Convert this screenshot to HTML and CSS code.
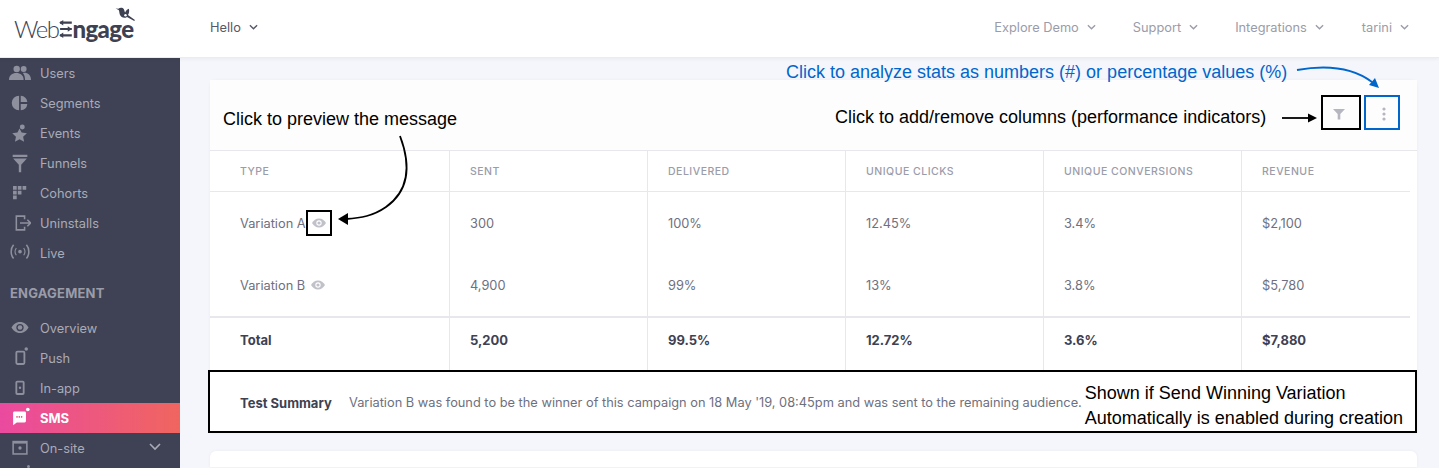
FILE: index.html
```html
<!DOCTYPE html>
<html lang="en">
<head>
<meta charset="utf-8">
<title>WebEngage SMS campaign</title>
<link rel="stylesheet" href="styles.css">
</head>
<body>
<header class="topbar">
  <div class="logo">
    <span class="logo-web">Web</span><svg class="logo-e" viewBox="0 0 14 20"><path d="M1 3h13M1 10h13M1 17h13" stroke="#3e4152" stroke-width="2.4" fill="none"/><path d="M4.500 0 0 3l4.500 3zM9.500 7l4.500 3-4.500 3zM4.500 14 0 17l4.500 3z" fill="#3e4152"/></svg><span class="logo-ngage">ngage</span>
    <svg class="logo-bird" viewBox="0 0 22 18"><path d="M.5 1.500 3.500 1.800C5 .3 8 .2 9.300 2.300c.8 1.400.5 2.600 1.300 3.500.8-2 2.400-3.800 4-4 .6 2.500.2 5-1 6.800l7.400 5.200-.7 1-7.700-4.300c-2.700 2-6.300.6-7.500-2.300-.7-1.700-.5-3.800-1.300-5z" fill="#3e4152"/><circle cx="11" cy="8.800" r="1.300" fill="#fff"/></svg>
  </div>
  <div class="nav-item nav-dark">Hello <svg class="chev" viewBox="0 0 10 6"><path d="M1 1l4 4 4-4"/></svg></div>
  <nav class="nav-right">
    <div class="nav-item">Explore Demo <svg class="chev" viewBox="0 0 10 6"><path d="M1 1l4 4 4-4"/></svg></div>
    <div class="nav-item">Support <svg class="chev" viewBox="0 0 10 6"><path d="M1 1l4 4 4-4"/></svg></div>
    <div class="nav-item">Integrations <svg class="chev" viewBox="0 0 10 6"><path d="M1 1l4 4 4-4"/></svg></div>
    <div class="nav-item nav-user">tarini <svg class="chev" viewBox="0 0 10 6"><path d="M1 1l4 4 4-4"/></svg></div>
  </nav>
</header>

<div class="shell">
  <aside class="sidebar">
    <a class="side-item"><svg class="side-icon" viewBox="0 0 24 24"><circle cx="8.400" cy="7.600" r="3.500"/><circle cx="16" cy="7.600" r="3.200"/><path d="M0 19.500c0-5 3.500-7.500 8-7.500s8 2.500 8 7.500zM17.500 19.500c0-3-.7-5.500-2.300-7.500 4.500-.8 8.800 1.800 8.800 7.500z"/></svg>Users</a>
    <a class="side-item"><svg class="side-icon" viewBox="0 0 24 24"><path d="M11 4v16a8 8 0 0 1 0-16zM12.800 4a8 8 0 0 1 7.200 7h-7.200zM12.800 13h7.200a8 8 0 0 1-7.200 7z"/></svg>Segments</a>
    <a class="side-item"><svg class="side-icon" viewBox="0 0 24 24"><path d="M11.500 7l2.300 4.500 5.700.7-4.100 3.900 1.100 5.400-5-2.700-5 2.700 1.100-5.400-4.100-3.900 5.700-.7z"/><circle cx="14.500" cy="5.500" r="2.700"/></svg>Events</a>
    <a class="side-item"><svg class="side-icon" viewBox="0 0 24 24"><path d="M4 3h16v2.500H4zM4.500 7h15L13.300 14v8h-2.600v-8z"/></svg>Funnels</a>
    <a class="side-item"><svg class="side-icon" viewBox="0 0 24 24"><path d="M4.400 4.400h4v4h-4zM9.600 4.400h4v4h-4zM14.800 4.400h4v4h-4zM4.400 9.600h4v4h-4zM9.600 9.600h4v4h-4zM4.400 14.800h4v4h-4z"/></svg>Cohorts</a>
    <a class="side-item"><svg class="side-icon line" viewBox="0 0 24 24"><path d="M17 8V4.500H8v15h9V16M12 12h11M20 8.500l3.500 3.500-3.500 3.500"/></svg>Uninstalls</a>
    <a class="side-item"><svg class="side-icon line" viewBox="0 0 24 24"><circle class="fill" cx="12" cy="10.500" r="2"/><path d="M5 3C1.500 7 1.500 14 5 18M19 3c3.500 4 3.500 11 0 15"/><path d="M8 6.500c-1.800 2.500-1.800 5.500 0 8M16 6.500c1.800 2.500 1.800 5.500 0 8" stroke-width="1.200"/></svg>Live</a>
    <div class="side-label">ENGAGEMENT</div>
    <a class="side-item"><svg class="side-icon" viewBox="0 0 24 24"><path d="M12 5.500c4.500 0 7.600 3 9.300 6-1.700 3-4.800 6-9.300 6s-7.600-3-9.300-6c1.700-3 4.800-6 9.300-6z"/><circle cx="12" cy="11.500" r="4" fill="#3f4254"/><circle cx="12" cy="11.500" r="2.500"/></svg>Overview</a>
    <a class="side-item"><svg class="side-icon line" viewBox="0 0 24 24"><rect x="8" y="5" width="8.800" height="13.500" rx="1.200" stroke-width="2"/><circle class="fill" cx="18.800" cy="2.200" r="1.900"/></svg>Push</a>
    <a class="side-item"><svg class="side-icon line" viewBox="0 0 24 24"><rect x="8" y="5" width="8" height="13.500" rx="1" stroke-width="2"/><circle class="fill" cx="12" cy="11.700" r="1.300"/></svg>In-app</a>
    <a class="side-item active"><svg class="side-icon" viewBox="0 0 24 24"><path d="M5.500 4.800h11.500a1.500 1.500 0 0 1 1.500 1.500v9a1.500 1.500 0 0 1-1.500 1.500H8.500l-4 3V6.300a1.500 1.500 0 0 1 1-1.500z"/><path d="M8 10.800h6.500" stroke="#ee5a85" stroke-width="1.800" stroke-dasharray="1.500 1"/><circle cx="20.500" cy="2.700" r="2"/></svg>SMS</a>
    <a class="side-item"><svg class="side-icon line" viewBox="0 0 24 24"><rect x="4.500" y="5" width="15" height="13.500" stroke-width="1.700"/><path d="M4.500 6h15" stroke-width="2.400"/><circle class="fill" cx="12" cy="12" r="1.800"/></svg>On-site<svg class="side-chev" viewBox="0 0 12 8"><path d="M1 1l5 5 5-5"/></svg></a>
    <div class="side-peek"><span class="side-peek-dot"></span></div>
  </aside>

  <main class="main">
    <section class="card">
      <div class="toolbar">
        <button class="tool tool-filter" aria-label="Filter columns"><svg viewBox="0 0 12 12"><path d="M0 1h12L7.300 6v5.500H4.700V6z"/></svg></button>
        <button class="tool tool-more" aria-label="More"><svg viewBox="0 0 4 14"><circle cx="2" cy="2" r="1.600"/><circle cx="2" cy="7" r="1.600"/><circle cx="2" cy="12" r="1.600"/></svg></button>
      </div>
      <div class="table">
        <div class="row row-head">
          <div class="cell">TYPE</div><div class="cell">SENT</div><div class="cell">DELIVERED</div><div class="cell">UNIQUE CLICKS</div><div class="cell">UNIQUE CONVERSIONS</div><div class="cell">REVENUE</div>
        </div>
        <div class="row row-body">
          <div class="cell"><span>Variation A</span><span class="eye eye-marked"><svg viewBox="0 0 14 10"><path d="M7 .5c3 0 5.500 2 7 4.500-1.500 2.500-4 4.500-7 4.500S1.500 7.500 0 5C1.500 2.500 4 .5 7 .5z"/><circle cx="7" cy="5" r="2.700" fill="#fff"/><circle cx="7" cy="5" r="1.600"/></svg></span></div>
          <div class="cell">300</div><div class="cell">100%</div><div class="cell">12.45%</div><div class="cell">3.4%</div><div class="cell">$2,100</div>
        </div>
        <div class="row row-body">
          <div class="cell"><span>Variation B</span><span class="eye"><svg viewBox="0 0 14 10"><path d="M7 .5c3 0 5.500 2 7 4.500-1.500 2.500-4 4.500-7 4.500S1.500 7.500 0 5C1.500 2.500 4 .5 7 .5z"/><circle cx="7" cy="5" r="2.700" fill="#fff"/><circle cx="7" cy="5" r="1.600"/></svg></span></div>
          <div class="cell">4,900</div><div class="cell">99%</div><div class="cell">13%</div><div class="cell">3.8%</div><div class="cell">$5,780</div>
        </div>
        <div class="row row-total">
          <div class="cell">Total</div><div class="cell">5,200</div><div class="cell">99.5%</div><div class="cell">12.72%</div><div class="cell">3.6%</div><div class="cell">$7,880</div>
        </div>
      </div>
      <div class="summary">
        <strong class="summary-label">Test Summary</strong>
        <span class="summary-text">Variation B was found to be the winner of this campaign on 18 May '19, 08:45pm and was sent to the remaining audience.</span>
        <span class="summary-note">Shown if Send Winning Variation<br>Automatically is enabled during creation</span>
      </div>
    </section>
    <section class="card card-next"></section>
  </main>
</div>

<svg class="arrows" viewBox="0 0 1439 468">
  <path class="arrow-black" d="M400 136C411 165 410 190 386 207C373 216 361 218 346 219"/>
  <path class="head-black" d="M338 219l10-6v12z"/>
  <path class="arrow-black" d="M1282 118h27"/>
  <path class="head-black" d="M1317 118l-9-4.500v9z"/>
  <path class="arrow-blue" d="M1297 70C1325 65 1352 67 1372 82"/>
  <path class="head-blue" d="M1379 88l-10-3 6-7z"/>
</svg>
<div class="note note-preview">Click to preview the message</div>
<div class="note note-columns">Click to add/remove columns (performance indicators)</div>
<div class="note note-blue">Click to analyze stats as numbers (#) or percentage values (%)</div>
</body>
</html>
```

FILE: styles.css
```css
* { box-sizing: border-box; }
html, body { margin: 0; height: 468px; overflow: hidden; }
body {
  position: relative;
  display: flex;
  flex-direction: column;
  font-family: Inter, "Liberation Sans", sans-serif;
  font-size: 12.800px;
  color: #6e7080;
  background: #f5f6fb;
}
.topbar {
  height: 58px;
  flex: none;
  display: flex;
  align-items: center;
  padding: 0 30px 3px 0;
  background: #fff;
  border-bottom: 1px solid #ececf0;
  box-shadow: 0 1px 4px rgba(0, 0, 0, .05);
  position: relative;
  z-index: 2;
}
.logo {
  width: 210px;
  flex: none;
  display: flex;
  align-items: center;
  padding-left: 14px;
  padding-top: 3px;
  color: #3e4152;
  font-family: Lato, sans-serif;
  font-size: 24px;
  position: relative;
}
.logo-web { font-weight: 300; letter-spacing: -1.500px; }
.logo-e { width: 13px; height: 18px; margin: 1px 0 0 1px; }
.logo-ngage { font-weight: 900; letter-spacing: -.6px; }
.logo-bird { width: 21px; height: 17px; position: absolute; left: 115px; top: -4px; }
.nav-item { display: flex; align-items: center; gap: 8px; color: #9a9ca9; white-space: nowrap; }
.nav-dark { color: #555868; }
.nav-right { margin-left: auto; display: flex; gap: 37px; }
.nav-user { margin-left: 1px; }
.chev { width: 9px; height: 6px; fill: none; stroke: currentColor; stroke-width: 1.500; }

.shell { flex: 1; display: flex; min-height: 0; }
.sidebar {
  width: 180px;
  flex: none;
  overflow: hidden;
  background: #3f4254;
  color: #a9abb8;
}
.side-item { height: 30px; display: flex; align-items: center; gap: 9px; padding-left: 9px; position: relative; }
.side-icon { width: 22px; height: 22px; flex: none; fill: #8e909e; }
.side-icon.line { fill: none; stroke: #8e909e; stroke-width: 1.700; }
.side-icon .fill { fill: #8e909e; stroke: none; }
.side-label { height: 45px; display: flex; align-items: center; padding: 4px 0 0 10px; font-size: 13px; font-weight: 700; color: #9a9ca9; letter-spacing: .2px; }
.side-item.active { background: linear-gradient(90deg, #ea4a9f, #f0655f); color: #fff; font-size: 13px; font-weight: 700; }
.active .side-icon { fill: #fff; }
.side-chev { width: 12px; height: 8px; position: absolute; right: 19px; top: 10px; fill: none; stroke: #a9abb8; stroke-width: 1.600; }
.side-peek { height: 5px; padding: 2px 0 0 27px; overflow: hidden; }
.side-peek-dot { display: block; width: 3px; height: 3px; border-radius: 50%; background: #8e909e; }

.main { flex: 1; min-width: 0; padding: 22px 22px 0 30px; }
.card { background: #fff; border-radius: 6px 6px 0 0; box-shadow: 0 0 3px rgba(60, 60, 90, .06); }
.card-next { height: 16px; margin-top: 18px; }
.toolbar {
  height: 71px;
  display: flex;
  justify-content: flex-end;
  gap: 3px;
  padding: 15px 17px 0 0;
  border-bottom: 1px solid #e8e8ec;
  background: #fdfdfe;
}
.tool { height: 35px; padding: 0; background: none; display: flex; align-items: center; justify-content: center; }
.tool-filter { width: 40px; border: 2px solid #000; }
.tool-filter svg { width: 12px; height: 12px; margin: 2px 4px 0 0; fill: #b5b6bf; }
.tool-more { width: 36px; border: 2px solid #0066cc; }
.tool-more svg { width: 4px; height: 14px; margin: 3px 0 0 4px; fill: #b5b6bf; }

.row { display: grid; grid-template-columns: 240px 198px 198px 198px 198px 168px; width: 1200px; }
.cell { padding-left: 20px; border-right: 1px solid #e8e8ec; display: flex; align-items: center; white-space: nowrap; }
.cell:first-child { padding-left: 30px; }
.cell:last-child { border-right: 0; }
.row-head { height: 41px; border-bottom: 1px solid #e8e8ec; font-size: 10.500px; font-weight: 500; letter-spacing: .5px; color: #9a9ca9; }
.row-body { height: 62px; }
.row-total { height: 55px; border-top: 2px solid #e8e8ec; font-size: 13px; font-weight: 700; color: #3e4152; }
.row-total .cell { align-items: flex-start; padding-top: 14px; }
.eye { width: 26px; height: 26px; display: flex; align-items: center; justify-content: center; border: 2px solid transparent; }
.eye svg { width: 14px; height: 10px; fill: #c0c1c9; }
.eye-marked { border-color: #000; }

.summary {
  height: 63px;
  margin: -1px 0 0 -2px;
  display: flex;
  align-items: center;
  padding: 2px 12px 0 30px;
  background: #fff;
  border: 2px solid #000;
  position: relative;
}
.summary-label { color: #3e4152; font-size: 13px; width: 109px; flex: none; }
.summary-text { white-space: nowrap; }
.summary-note {
  margin-left: auto;
  padding-top: 6px;
  color: #000;
  font-family: "Liberation Sans", Arial, sans-serif;
  font-size: 18px;
  line-height: 25px;
  white-space: nowrap;
}

.arrows { position: absolute; left: 0; top: 0; width: 1439px; height: 468px; pointer-events: none; z-index: 3; }
.arrow-black { fill: none; stroke: #000; stroke-width: 1.800; }
.head-black { fill: #000; }
.arrow-blue { fill: none; stroke: #0066cc; stroke-width: 1.800; }
.head-blue { fill: #0066cc; }
.note {
  position: absolute;
  z-index: 3;
  font-family: "Liberation Sans", Arial, sans-serif;
  font-size: 18px;
  line-height: 22px;
  color: #000;
  white-space: nowrap;
}
.note-preview { left: 223px; top: 108px; }
.note-columns { left: 835px; top: 106px; }
.note-blue { left: 786px; top: 61px; color: #0066cc; }
```
